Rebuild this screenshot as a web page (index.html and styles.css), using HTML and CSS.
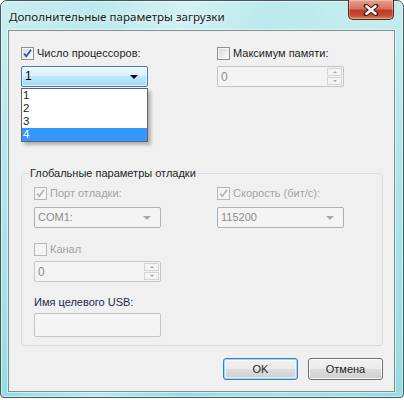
FILE: index.html
```html
<!DOCTYPE html>
<html lang="ru">
<head>
<meta charset="utf-8">
<link rel="stylesheet" href="styles.css">
</head>
<body>
<div class="window">
  <div class="titlebar">
    <span class="title">Дополнительные параметры загрузки</span>
    <button class="close" aria-label="Закрыть">
      <svg width="16" height="12" viewBox="0 0 16 12">
        <path d="M3 2 L13 10 M13 2 L3 10" stroke="#3b2323" stroke-width="4.6" stroke-linecap="round"/>
        <path d="M3.4 2.3 L12.6 9.7 M12.6 2.3 L3.4 9.7" stroke="#ffffff" stroke-width="2.4" stroke-linecap="round"/>
      </svg>
    </button>
  </div>
  <div class="client">
    <div class="top-grid">
      <div class="col">
        <label class="chk"><span class="box checked"><svg width="11" height="11" viewBox="0 0 11 11"><path d="M2 5.5 L4.3 8.3 L9 1.8" fill="none" stroke="#3d52a0" stroke-width="1.8"/></svg></span>Число процессоров:</label>
        <div class="combo focused"><span>1</span><span class="arrow dark"></span></div>
        <ul class="dropdown">
          <li>1</li>
          <li>2</li>
          <li>3</li>
          <li class="sel">4</li>
        </ul>
      </div>
      <div class="col">
        <label class="chk"><span class="box"></span>Максимум памяти:</label>
        <div class="spin disabled"><span>0</span><span class="spin-btns"><span class="sb"><span class="up"></span></span><span class="sb"><span class="down"></span></span></span></div>
      </div>
    </div>
    <fieldset class="group">
      <legend>Глобальные параметры отладки</legend>
      <div class="group-grid">
        <div class="col">
          <label class="chk dis"><span class="box checked dis"><svg width="11" height="11" viewBox="0 0 11 11"><path d="M2 5.5 L4.3 8.3 L9 1.8" fill="none" stroke="#b4b4b4" stroke-width="1.6"/></svg></span>Порт отладки:</label>
          <div class="combo disabled"><span>COM1:</span><span class="arrow"></span></div>
          <label class="chk dis row2"><span class="box dis"></span>Канал</label>
          <div class="spin disabled"><span>0</span><span class="spin-btns"><span class="sb"><span class="up"></span></span><span class="sb"><span class="down"></span></span></span></div>
          <div class="lbl">Имя целевого USB:</div>
          <div class="textbox disabled"></div>
        </div>
        <div class="col">
          <label class="chk dis"><span class="box checked dis"><svg width="11" height="11" viewBox="0 0 11 11"><path d="M2 5.5 L4.3 8.3 L9 1.8" fill="none" stroke="#b4b4b4" stroke-width="1.6"/></svg></span>Скорость (бит/с):</label>
          <div class="combo disabled"><span>115200</span><span class="arrow"></span></div>
        </div>
      </div>
    </fieldset>
    <div class="buttons">
      <button class="btn default">OK</button>
      <button class="btn">Отмена</button>
    </div>
  </div>
</div>
</body>
</html>
```
FILE: styles.css
```css
* { box-sizing: border-box; }
html, body { margin: 0; padding: 0; background: #ffffff; }
body { font-family: "Liberation Sans", "Noto Sans", sans-serif; font-size: 11px; color: #1e1e1e; }

.window {
  width: 404px;
  height: 398px;
  border: 1px solid #44565e;
  border-radius: 7px 7px 4px 4px;
  background:
    linear-gradient(103deg, rgba(255,255,255,0.2) 0%, rgba(255,255,255,0) 20%, rgba(255,255,255,0.35) 38%, rgba(255,255,255,0) 55%, rgba(255,255,255,0.15) 75%, rgba(255,255,255,0) 100%),
    linear-gradient(180deg, #bdeaed 0%, #a9e4e8 40%, #93dde1 100%);
  box-shadow: inset 0 0 0 1px rgba(255,255,255,0.5);
  display: flex;
  flex-direction: column;
  padding: 0 8px 5px 7px;
}

.titlebar {
  height: 29px;
  display: flex;
  justify-content: space-between;
  align-items: flex-start;
}
.title {
  margin-top: 8px;
  margin-left: 1px;
  line-height: 15px;
  font-family: "Noto Sans", "Open Sans", sans-serif;
  font-size: 11.6px;
  color: #1b1b1b;
  text-shadow: 0 0 6px rgba(255,255,255,0.9);
}
.close {
  width: 46px;
  height: 20px;
  margin: -1px 1px 0 0;
  padding: 0;
  border: 1px solid #5a2219;
  border-top: none;
  border-radius: 0 0 5px 5px;
  background: linear-gradient(180deg, #e7a08f 0%, #d6735d 45%, #c23a22 55%, #c34a30 80%, #d8825f 100%);
  box-shadow: inset 0 0 0 1px rgba(255,255,255,0.3);
  display: flex;
  align-items: center;
  justify-content: center;
}

.client {
  flex: 1;
  background: #f0f0f0;
  border: 1px solid #7d8e96;
  box-shadow: 0 0 0 1px rgba(255,255,255,0.5);
  padding: 16px 11px 0 12px;
}

.top-grid {
  display: grid;
  grid-template-columns: 127px 127px;
  column-gap: 69px;
}
.col { position: relative; display: flex; flex-direction: column; }

.chk {
  display: flex;
  align-items: center;
  height: 13px;
  line-height: 13px;
  color: #1e1e1e;
  white-space: nowrap;
}
.chk.dis { color: #a3a3a3; }
.box {
  width: 13px;
  height: 13px;
  border: 1px solid #8e8f8f;
  background: linear-gradient(135deg, #d2d6dc 0%, #eceef0 60%, #fafafa 100%);
  box-shadow: inset 0 0 0 1px #f4f4f4;
  margin-right: 3px;
  display: flex;
  align-items: center;
  justify-content: center;
  flex: none;
}
.box.dis {
  border-color: #b7b7b7;
  background: #f4f4f4;
  box-shadow: none;
}

.combo {
  margin-top: 6px;
  height: 21px;
  border: 1px solid #adb2b5;
  border-radius: 2px;
  display: flex;
  align-items: center;
  justify-content: space-between;
  padding: 0 9px 0 3px;
  line-height: 15px;
}
.combo.focused {
  border-color: #3c7fb1;
  background: linear-gradient(180deg, #eaf6fd 0%, #d9f0fc 45%, #bee6fd 50%, #a7d9f5 100%);
  box-shadow: inset 0 0 0 1px rgba(255,255,255,0.6);
  color: #000;
  font-size: 12px;
}
.combo.disabled {
  background: #f4f4f4;
  color: #8d8d8d;
  margin-top: 7px;
}
.arrow {
  width: 0; height: 0;
  border-left: 4px solid transparent;
  border-right: 4px solid transparent;
  border-top: 4px solid #a9a9a9;
}
.arrow.dark { border-top-color: #000; }

.dropdown {
  position: absolute;
  left: 0;
  top: 41px;
  width: 127px;
  margin: 0;
  padding: 0;
  list-style: none;
  background: #fff;
  border: 1px solid #646464;
  box-shadow: 3px 3px 3px rgba(0,0,0,0.25);
  z-index: 2;
}
.dropdown li {
  height: 13px;
  line-height: 13px;
  font-size: 11.5px;
  padding-left: 1px;
  color: #1e1e1e;
}
.dropdown li.sel { background: #3399ff; color: #fff; }

.spin {
  margin-top: 6px;
  height: 21px;
  border: 1px solid #c3c6c8;
  border-radius: 2px;
  display: flex;
  align-items: center;
  justify-content: space-between;
  padding: 0 1px 0 3px;
  font-size: 12px;
}
.spin.disabled { background: #f4f4f4; color: #8d8d8d; }
.spin-btns { display: flex; flex-direction: column; gap: 1px; }
.sb {
  width: 15px;
  height: 8px;
  border: 1px solid #d5d5d5;
  background: #f4f4f4;
  display: flex;
  align-items: center;
  justify-content: center;
}
.up, .down {
  width: 0; height: 0;
  border-left: 2px solid transparent;
  border-right: 2px solid transparent;
}
.up { border-bottom: 2px solid #a5a5a5; }
.down { border-top: 2px solid #a5a5a5; }

.group {
  margin: 79px 0 0 0;
  padding: 0;
  border: 1px solid #d5dfe5;
  border-radius: 3px;
  min-width: 0;
}
.group legend {
  margin-left: 7px;
  padding: 0 1px;
  line-height: 15px;
  color: #1e1e1e;
}
.group-grid {
  display: grid;
  grid-template-columns: 127px 127px;
  column-gap: 56px;
  padding: 6px 12px 8px 12px;
}
.row2 { margin-top: 15px; }
.group-grid .spin { margin-top: 5px; }
.lbl {
  margin-top: 13px;
  line-height: 15px;
  color: #1e2a4a;
}
.textbox {
  margin-top: 3px;
  height: 24px;
  border: 1px solid #c3c6c8;
  border-radius: 2px;
  background: #f4f4f4;
}

.buttons {
  display: flex;
  justify-content: flex-end;
  gap: 10px;
  margin-top: 12px;
  padding-right: 0;
}
.btn {
  width: 75px;
  height: 22px;
  font-family: inherit;
  font-size: 11px;
  color: #1e1e1e;
  border: 1px solid #707070;
  border-radius: 3px;
  background: linear-gradient(180deg, #f2f2f2 0%, #ebebeb 50%, #dddddd 50%, #cfcfcf 100%);
  box-shadow: inset 0 0 0 1px rgba(255,255,255,0.8);
  padding: 0;
}
.btn.default {
  border-color: #3c7fb1;
  box-shadow: inset 0 0 0 1px #9ad8f4, inset 0 0 0 2px rgba(255,255,255,0.5);
}
```
